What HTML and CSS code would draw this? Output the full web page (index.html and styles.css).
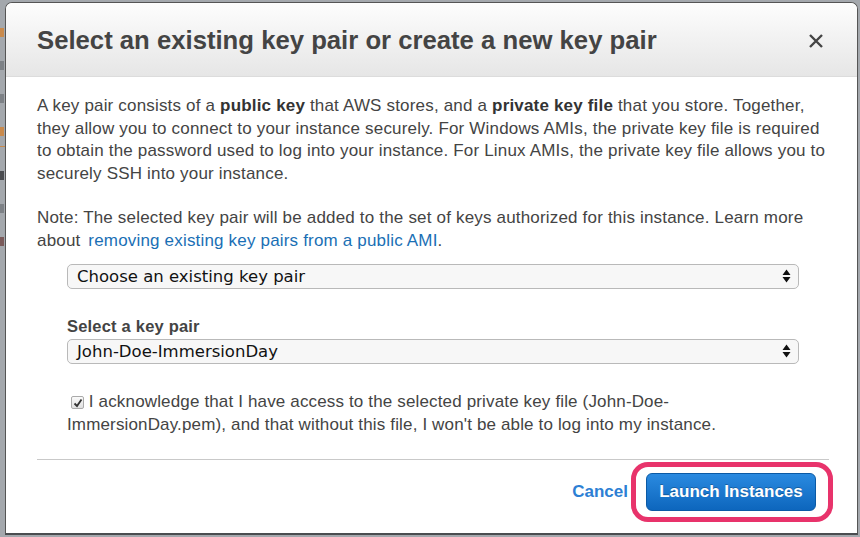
FILE: index.html
```html
<!DOCTYPE html>
<html>
<head>
<meta charset="utf-8">
<link rel="stylesheet" href="styles.css">
</head>
<body>
<div class="desk">
  <div class="backdrop">
    <div class="frag frag-orange"></div>
    <div class="frag"></div>
    <div class="frag"></div>
    <div class="frag frag-orange"></div>
    <div class="rule"></div>
    <div class="frag dark"></div>
    <div class="frag"></div>
    <div class="frag red"></div>
  </div>
  <div class="dialog">
    <div class="header">
      <h1 class="title">Select an existing key pair or create a new key pair</h1>
      <span class="close">
        <svg width="16" height="16" viewBox="0 0 16 16"><path d="M2 2 L14 14 M14 2 L2 14" stroke="#444" stroke-width="2.4" stroke-linecap="butt"/></svg>
      </span>
    </div>
    <div class="body">
      <p class="para">A key pair consists of a <b>public key</b> that AWS stores, and a <b>private key file</b> that you store. Together, they allow you to connect to your instance securely. For Windows AMIs, the private key file is required to obtain the password used to log into your instance. For Linux AMIs, the private key file allows you to securely SSH into your instance.</p>
      <p class="para note">Note: The selected key pair will be added to the set of keys authorized for this instance. Learn more about <a class="link">removing existing key pairs from a public AMI</a>.</p>
      <div class="form">
        <div class="select"><span>Choose an existing key pair</span><span class="arrows"><svg width="9" height="14" viewBox="0 0 9 14"><path d="M4.5 0.5 L8.5 6 L0.5 6 Z M0.5 8 L8.5 8 L4.5 13.5 Z" fill="#111"/></svg></span></div>
        <div class="label">Select a key pair</div>
        <div class="select"><span>John-Doe-ImmersionDay</span><span class="arrows"><svg width="9" height="14" viewBox="0 0 9 14"><path d="M4.5 0.5 L8.5 6 L0.5 6 Z M0.5 8 L8.5 8 L4.5 13.5 Z" fill="#111"/></svg></span></div>
        <div class="ack"><span class="check"><svg width="10" height="10" viewBox="0 0 10 10"><path d="M1.5 5.5 L4 8 L8.5 1.5" stroke="#333" stroke-width="1.8" fill="none"/></svg></span> I acknowledge that I have access to the selected private key file (John-Doe-ImmersionDay.pem), and that without this file, I won't be able to log into my instance.</div>
      </div>
      <div class="divider"></div>
      <div class="footer">
        <a class="cancel">Cancel</a>
        <div class="ring"><button class="launch">Launch Instances</button></div>
      </div>
    </div>
  </div>
</div>
</body>
</html>
```

FILE: styles.css
```css
html, body {
  margin: 0;
  padding: 0;
}
body {
  width: 860px;
  height: 537px;
  overflow: hidden;
  background: #a4a8ad;
  font-family: "Liberation Sans", Arial, sans-serif;
}
.desk {
  display: flex;
  height: 537px;
}
.backdrop {
  width: 5px;
  display: flex;
  flex-direction: column;
  padding-top: 28px;
  gap: 24px;
  overflow: hidden;
}
.frag {
  width: 4px;
  height: 9px;
  background: #7d8186;
}
.frag-orange {
  background: #c98a4c;
}
.dark {
  background: #4a4c50;
}
.red {
  background: #7a5a5a;
}
.rule {
  height: 1px;
  background: #c98a4c;
  margin-top: -14px;
}
.dialog {
  margin-top: 2px;
  width: 851px;
  height: 530px;
  background: #fff;
  border: 1px solid #555;
  border-bottom: 2px solid #4b4d50;
  border-radius: 7px 7px 0 0;
  overflow: hidden;
  display: flex;
  flex-direction: column;
}
.header {
  height: 73px;
  background: linear-gradient(#fdfdfd, #e6e6e6);
  border-bottom: 1px solid #dcdcdc;
  display: flex;
  align-items: center;
  justify-content: space-between;
  padding: 0 33px 0 31px;
}
.title {
  margin: 0;
  font-size: 25.7px;
  font-weight: bold;
  color: #444;
  padding-top: 2px;
}
.close {
  display: flex;
  margin-top: 2px;
}
.body {
  padding: 18px 24px 0 31px;
  display: flex;
  flex-direction: column;
}
.para {
  margin: 0;
  font-size: 17px;
  letter-spacing: 0.18px;
  line-height: 22.6px;
  color: #444;
}
.para b {
  color: #333;
}
.note {
  margin-top: 22px;
}
.link {
  color: #1a6fb5;
  margin-left: 3px;
}
.form {
  padding-left: 30px;
  padding-right: 34px;
  margin-top: 11px;
  display: flex;
  flex-direction: column;
}
.select {
  height: 23px;
  border: 1px solid #b9b9b9;
  border-radius: 5px;
  background: #f7f7f7;
  display: flex;
  align-items: center;
  justify-content: space-between;
  padding: 0 7px 0 9px;
  font-family: "DejaVu Sans", sans-serif;
  font-size: 16.5px;
  color: #111;
}
.arrows {
  display: flex;
}
.label {
  margin-top: 28px;
  margin-bottom: 3px;
  font-size: 16.5px;
  letter-spacing: 0.2px;
  font-weight: bold;
  color: #444;
  line-height: 19px;
}
.ack {
  margin-top: 26px;
  font-size: 17px;
  letter-spacing: 0.15px;
  line-height: 23px;
  color: #444;
}
.check {
  display: inline-flex;
  align-items: center;
  justify-content: center;
  width: 11px;
  height: 11px;
  border: 1px solid #aaa;
  border-radius: 2px;
  background: linear-gradient(#fafafa, #e0e0e0);
  margin-left: 4px;
  vertical-align: -1px;
}
.divider {
  margin-top: 23px;
  height: 1px;
  background: #c9c9c9;
  width: 792px;
}
.footer {
  display: flex;
  justify-content: flex-end;
  align-items: center;
  margin-top: 2px;
}
.cancel {
  color: #2d7fd4;
  font-weight: bold;
  font-size: 17px;
  margin-right: 3px;
}
.ring {
  border: 5px solid #e8336b;
  border-radius: 17px;
  padding: 6px 12px 6px 10px;
}
.launch {
  display: block;
  width: 170px;
  height: 38px;
  border: 1px solid #0b5aa5;
  border-radius: 6px;
  background: linear-gradient(#2a8ae0, #0d66bd);
  color: #fff;
  font-family: "Liberation Sans", Arial, sans-serif;
  font-weight: bold;
  font-size: 17px;
  text-shadow: 0 -1px 0 rgba(0,0,0,0.25);
}
```
